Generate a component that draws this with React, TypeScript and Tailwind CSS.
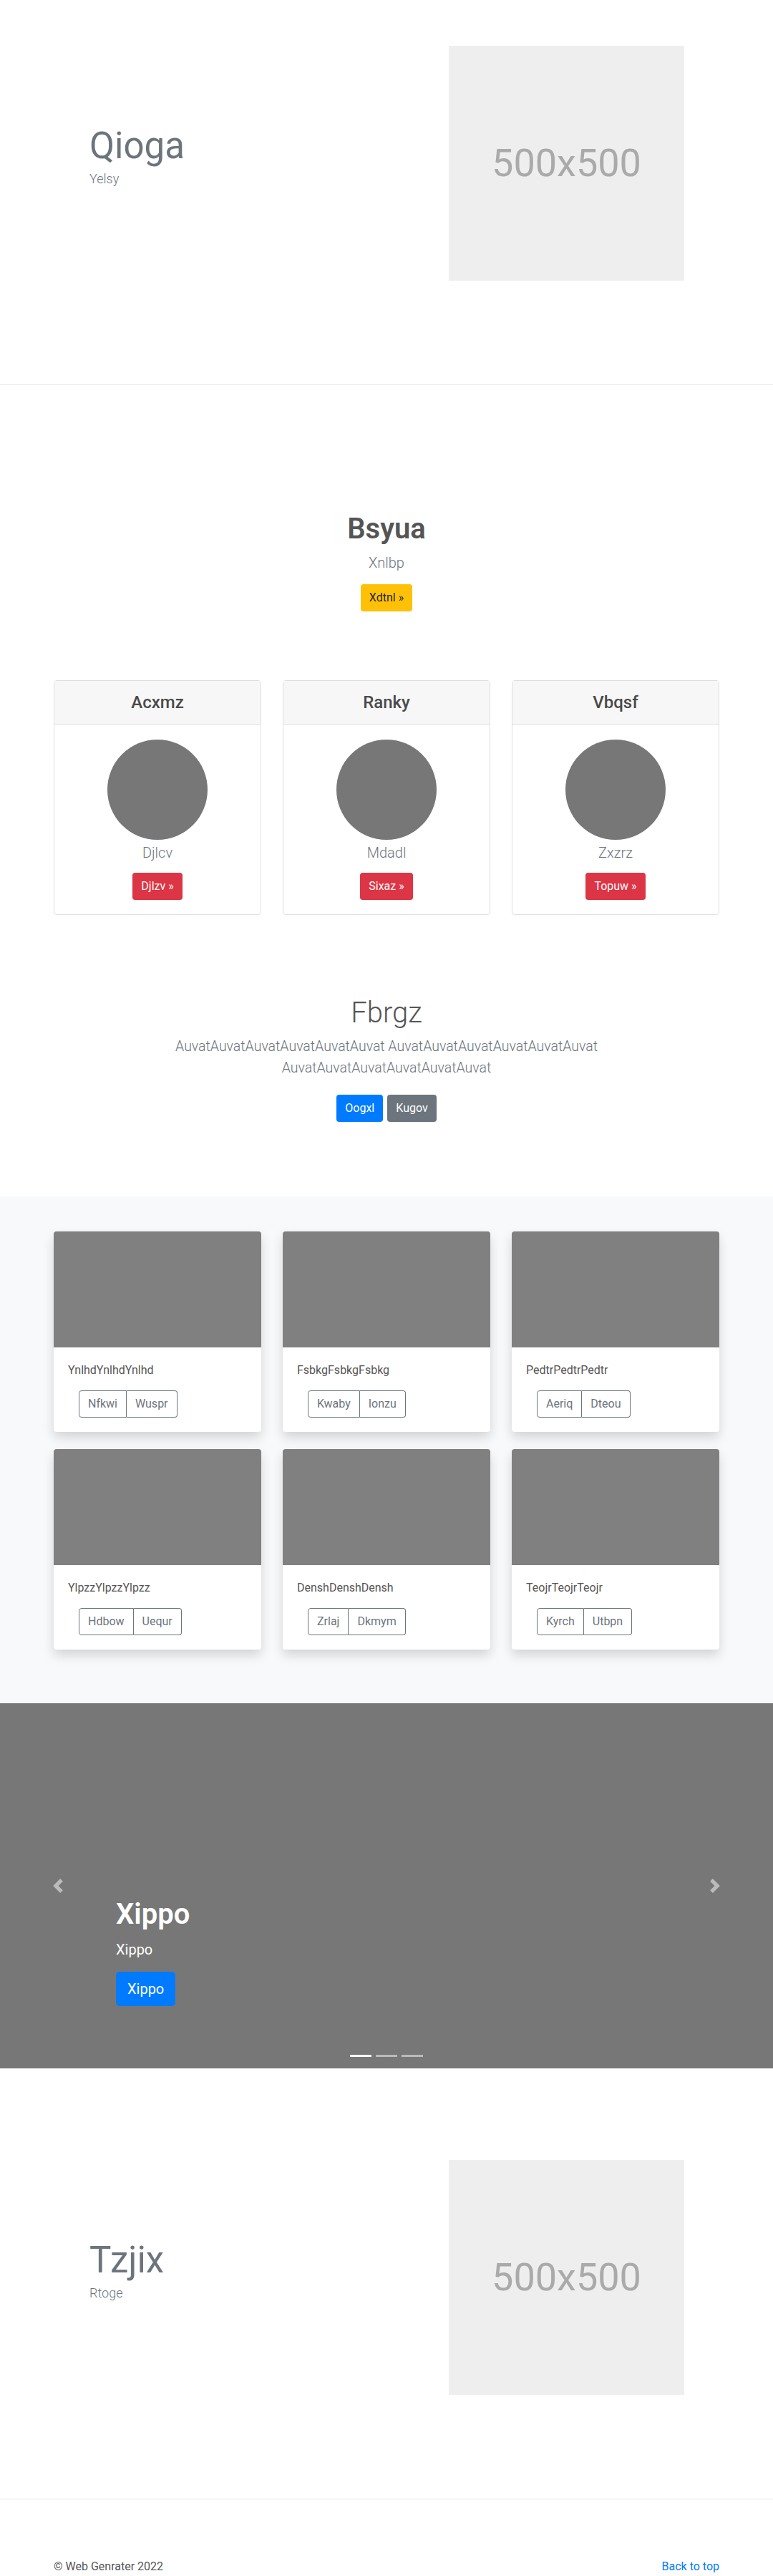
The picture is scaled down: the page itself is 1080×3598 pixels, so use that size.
import { ReactNode } from 'react';

type HeroProps = {
  title: string;
  subtitle: string;
};

const font = "font-['Segoe_UI',Roboto,'Helvetica_Neue',Arial,sans-serif]";

const Placeholder = () => (
  <div className="w-[329px] h-[328px] bg-[#eeeeee] flex items-center justify-center flex-shrink-0">
    <span className="text-[54px] leading-none text-[#aaaaaa]">500x500</span>
  </div>
);

const Hero = ({ title, subtitle }: HeroProps) => (
  <section className="border-b border-[#e5e5e5] pt-16 pb-[145px]">
    <div className="w-[930px] mx-auto flex items-center">
      <div className="flex-1 pl-[50px] mb-[20px]">
        <h1 className="text-[51px] leading-[1.2] font-normal text-[#6c757d]">{title}</h1>
        <p className="text-[18px] leading-[1.5] font-light text-[#6c757d] mt-0.5">{subtitle}</p>
      </div>
      <div className="mr-[49px]">
        <Placeholder />
      </div>
    </div>
  </section>
);

const people = [
  { title: 'Acxmz', name: 'Djlcv', action: 'Djlzv »' },
  { title: 'Ranky', name: 'Mdadl', action: 'Sixaz »' },
  { title: 'Vbqsf', name: 'Zxzrz', action: 'Topuw »' },
];

const albums = [
  { text: 'YnlhdYnlhdYnlhd', a: 'Nfkwi', b: 'Wuspr' },
  { text: 'FsbkgFsbkgFsbkg', a: 'Kwaby', b: 'Ionzu' },
  { text: 'PedtrPedtrPedtr', a: 'Aeriq', b: 'Dteou' },
  { text: 'YlpzzYlpzzYlpzz', a: 'Hdbow', b: 'Uequr' },
  { text: 'DenshDenshDensh', a: 'Zrlaj', b: 'Dkmym' },
  { text: 'TeojrTeojrTeojr', a: 'Kyrch', b: 'Utbpn' },
];

const Btn = ({ className, children }: { className: string; children: ReactNode }) => (
  <button className={`h-[38px] px-3 rounded text-base leading-6 ${className}`}>{children}</button>
);

const Chevron = ({ dir }: { dir: 'prev' | 'next' }) => (
  <svg width="20" height="20" viewBox="0 0 8 8" fill="#fff" fillOpacity="0.5">
    {dir === 'prev' ? (
      <path d="M5.25 0l-4 4 4 4 1.5-1.5L4.25 4l2.5-2.5L5.25 0z" />
    ) : (
      <path d="M2.75 0l-1.5 1.5L3.75 4l-2.5 2.5L2.75 8l4-4-4-4z" />
    )}
  </svg>
);

export default function App() {
  return (
    <div className={`${font} bg-white text-[#212529] w-[1080px]`}>
      <Hero title="Qioga" subtitle="Yelsy" />

      {/* intro + three cards */}
      <section className="pt-[177px]">
        <div className="w-[930px] mx-auto text-center">
          <h2 className="text-[40px] leading-[48px] font-semibold text-[#555555]">Bsyua</h2>
          <p className="text-[20px] leading-[30px] font-light text-[#6c757d] mt-2">Xnlbp</p>
          <Btn className="mt-[15px] bg-[#ffc107] text-[#212529]">Xdtnl »</Btn>
        </div>
        <div className="w-[930px] mx-auto grid grid-cols-3 gap-[30px] mt-[96px]">
          {people.map((p) => (
            <div key={p.title} className="border border-[#dfdfdf] rounded text-center">
              <div className="h-[61px] bg-[#f7f7f7] border-b border-[#dfdfdf] flex items-center justify-center">
                <h4 className="text-[24px] leading-[1.2] font-medium text-[#4a4a4a]">{p.title}</h4>
              </div>
              <div className="pt-[21px] pb-[20px] flex flex-col items-center">
                <div className="w-[140px] h-[140px] rounded-full bg-[#777777]" />
                <p className="text-[20px] leading-[30px] font-light text-[#6c757d] mt-[3px]">{p.name}</p>
                <Btn className="mt-[13px] bg-[#dc3545] text-white">{p.action}</Btn>
              </div>
            </div>
          ))}
        </div>
      </section>

      {/* lead text */}
      <section className="pt-[113px] pb-[104px] text-center">
        <h1 className="text-[40px] leading-[48px] font-light text-[#555555]">Fbrgz</h1>
        <p className="max-w-[610px] mx-auto mt-2 text-[19.5px] leading-[30px] font-light text-[#6c757d]">
          AuvatAuvatAuvatAuvatAuvatAuvat AuvatAuvatAuvatAuvatAuvatAuvat AuvatAuvatAuvatAuvatAuvatAuvat
        </p>
        <div className="mt-[22px] flex justify-center gap-1.5">
          <Btn className="bg-[#007bff] text-white">Oogxl</Btn>
          <Btn className="bg-[#6c757d] text-white">Kugov</Btn>
        </div>
      </section>

      {/* album */}
      <section className="bg-[#f8f9fa] pt-[49px] pb-[75px]">
        <div className="w-[930px] mx-auto grid grid-cols-3 gap-x-[30px] gap-y-6">
          {albums.map((a) => (
            <div key={a.text} className="bg-white rounded overflow-hidden shadow-[0_8px_16px_rgba(0,0,0,0.15)]">
              <div className="h-[162px] bg-[#808080]" />
              <div className="p-5">
                <p className="text-base leading-6 text-[#555555]">{a.text}</p>
                <div className="mt-4 ml-[15px] flex">
                  <button className="h-[38px] px-3 border border-[#6c757d] rounded-l text-[#6c757d] text-base">{a.a}</button>
                  <button className="h-[38px] px-3 border border-l-0 border-[#6c757d] rounded-r text-[#6c757d] text-base">{a.b}</button>
                </div>
              </div>
            </div>
          ))}
        </div>
      </section>

      {/* carousel */}
      <section className="relative h-[510px] bg-[#777777] mb-16 flex flex-col justify-end px-[162px] pb-[87px]">
        <div className="absolute left-0 top-0 h-full w-[162px] flex items-center justify-center">
          <Chevron dir="prev" />
        </div>
        <div className="absolute right-0 top-0 h-full w-[162px] flex items-center justify-center">
          <Chevron dir="next" />
        </div>
        <h1 className="text-[40px] leading-[48px] font-semibold text-white">Xippo</h1>
        <p className="text-[20px] leading-[30px] text-white mt-[10px]">Xippo</p>
        <div className="mt-4">
          <button className="h-[48px] px-4 rounded-[5px] bg-[#007bff] text-white text-[20px]">Xippo</button>
        </div>
        <div className="absolute bottom-[16px] left-0 right-0 flex justify-center gap-1.5">
          <span className="w-[30px] h-[3px] bg-white" />
          <span className="w-[30px] h-[3px] bg-white/50" />
          <span className="w-[30px] h-[3px] bg-white/50" />
        </div>
      </section>

      <Hero title="Tzjix" subtitle="Rtoge" />

      <footer className="pt-[82px] pb-12">
        <div className="w-[930px] mx-auto flex justify-between text-base leading-6">
          <span className="text-[#555555]">© Web Genrater 2022</span>
          <a href="#" className="text-[#007bff]">Back to top</a>
        </div>
      </footer>
    </div>
  );
}
